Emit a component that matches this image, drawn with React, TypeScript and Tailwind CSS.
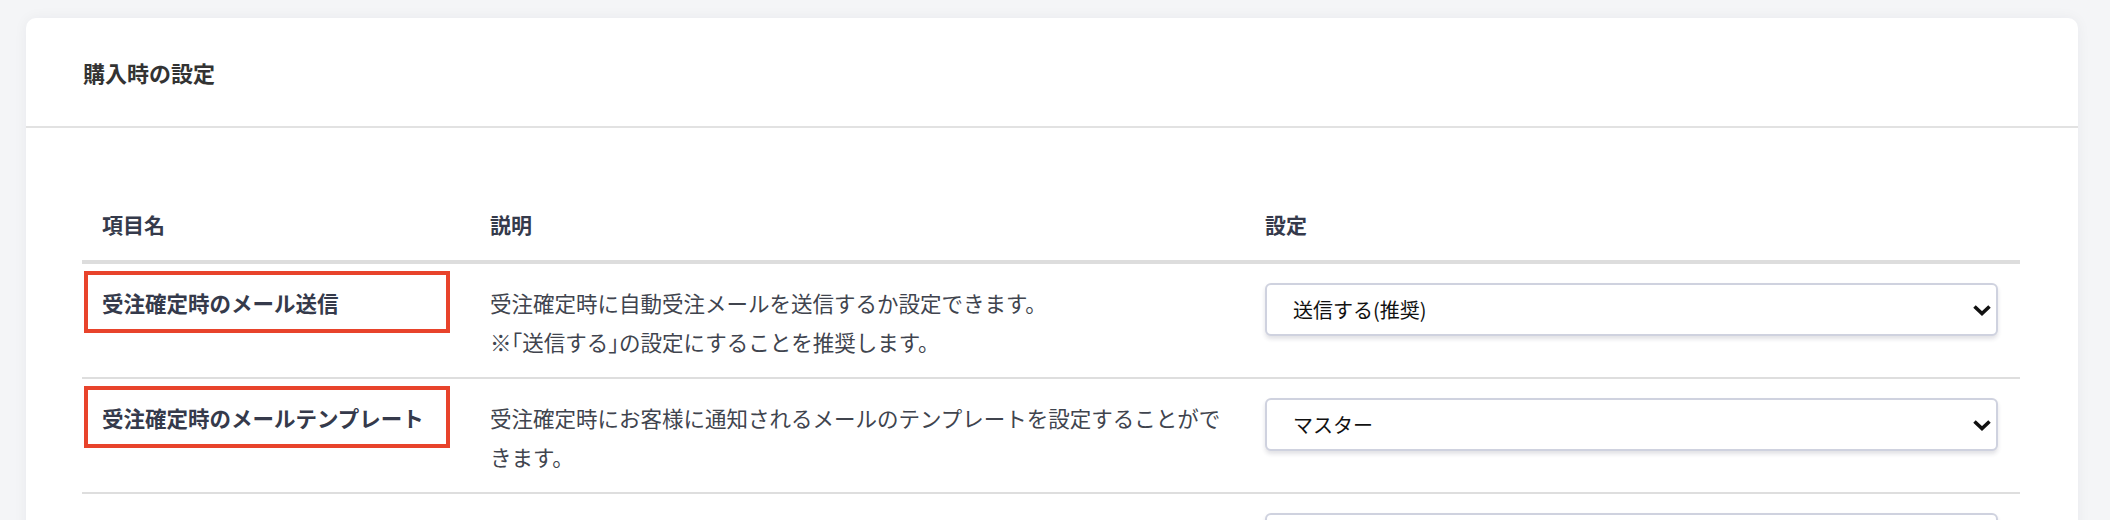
import type { ReactNode } from "react";

interface SettingRow {
  label: string;
  description: ReactNode;
  options: string[];
  highlighted?: boolean;
}

const rows: SettingRow[] = [
  {
    label: "受注確定時のメール送信",
    description: (
      <>
        受注確定時に自動受注メールを送信するか設定できます。
        <br />
        <span className="[font-feature-settings:'halt']">※「送信する」</span>の設定にすることを推奨します。
      </>
    ),
    options: ["送信する(推奨)", "送信しない"],
    highlighted: true,
  },
  {
    label: "受注確定時のメールテンプレート",
    description: "受注確定時にお客様に通知されるメールのテンプレートを設定することができます。",
    options: ["マスター"],
    highlighted: true,
  },
  {
    label: "受注確定時のBCC送信",
    description: "受注確定時に送信されるメールのBCC先を設定できます。",
    options: ["送信しない"],
  },
];

function Chevron() {
  return (
    <svg
      viewBox="0 0 20 12"
      className="pointer-events-none absolute right-[6px] top-1/2 h-[12px] w-[20px] -translate-y-1/2"
      fill="none"
      stroke="#111"
      strokeWidth="3.6"
      aria-hidden="true"
    >
      <path d="M2.5 2.5 10 9.5l7.5-7" />
    </svg>
  );
}

function SettingSelect({ options }: { options: string[] }) {
  return (
    <div className="relative">
      <select className="h-[53px] w-full appearance-none rounded-[6px] border-2 border-[#cfd2df] bg-white pl-[26px] pr-10 text-[20px] text-[#111] shadow-[0_3px_4px_rgba(40,45,70,0.14)] outline-none">
        {options.map((option) => (
          <option key={option}>{option}</option>
        ))}
      </select>
      <Chevron />
    </div>
  );
}

export default function App() {
  return (
    <div className="min-h-screen bg-[#f4f5f7] pb-10 pl-[26px] pr-[32px] pt-[18px] font-['Noto_Sans_CJK_JP','Noto_Sans',sans-serif]">
      <section className="rounded-[10px] bg-white shadow-[0_0_14px_rgba(30,40,60,0.05)]">
        <header className="flex h-[110px] items-center border-b-2 border-[#e2e2e2] px-[57px]">
          <h1 className="text-[22px] font-bold text-[#333333]">購入時の設定</h1>
        </header>

        <div className="pl-[56px] pr-[58px] pt-[80px]">
          <div className="grid grid-cols-[388px_775px_1fr] border-b-4 border-[#dddddd] pb-[20px] text-[21px] font-bold leading-[32px] text-[#353a4b]">
            <div className="px-[20px]">項目名</div>
            <div className="px-[20px]">説明</div>
            <div className="px-[20px]">設定</div>
          </div>

          {rows.map((row) => (
            <div
              key={row.label}
              className="grid grid-cols-[388px_775px_1fr] border-b-2 border-[#dedede]"
            >
              <div className="relative px-[20px] pb-[16px] pt-[19px] text-[21.5px] font-bold leading-[39px] text-[#353a4b]">
                {row.highlighted && (
                  <span className="pointer-events-none absolute left-[2px] top-[7px] h-[62px] w-[366px] border-4 border-[#e8432b]" />
                )}
                {row.label}
              </div>
              <div className="pb-[16px] pl-[20px] pr-[15px] pt-[19px] text-[21.5px] leading-[39px] text-[#40444e]">
                {row.description}
              </div>
              <div className="pb-[16px] pl-[20px] pr-[22px] pt-[19px]">
                <SettingSelect options={row.options} />
              </div>
            </div>
          ))}
        </div>
      </section>
    </div>
  );
}
